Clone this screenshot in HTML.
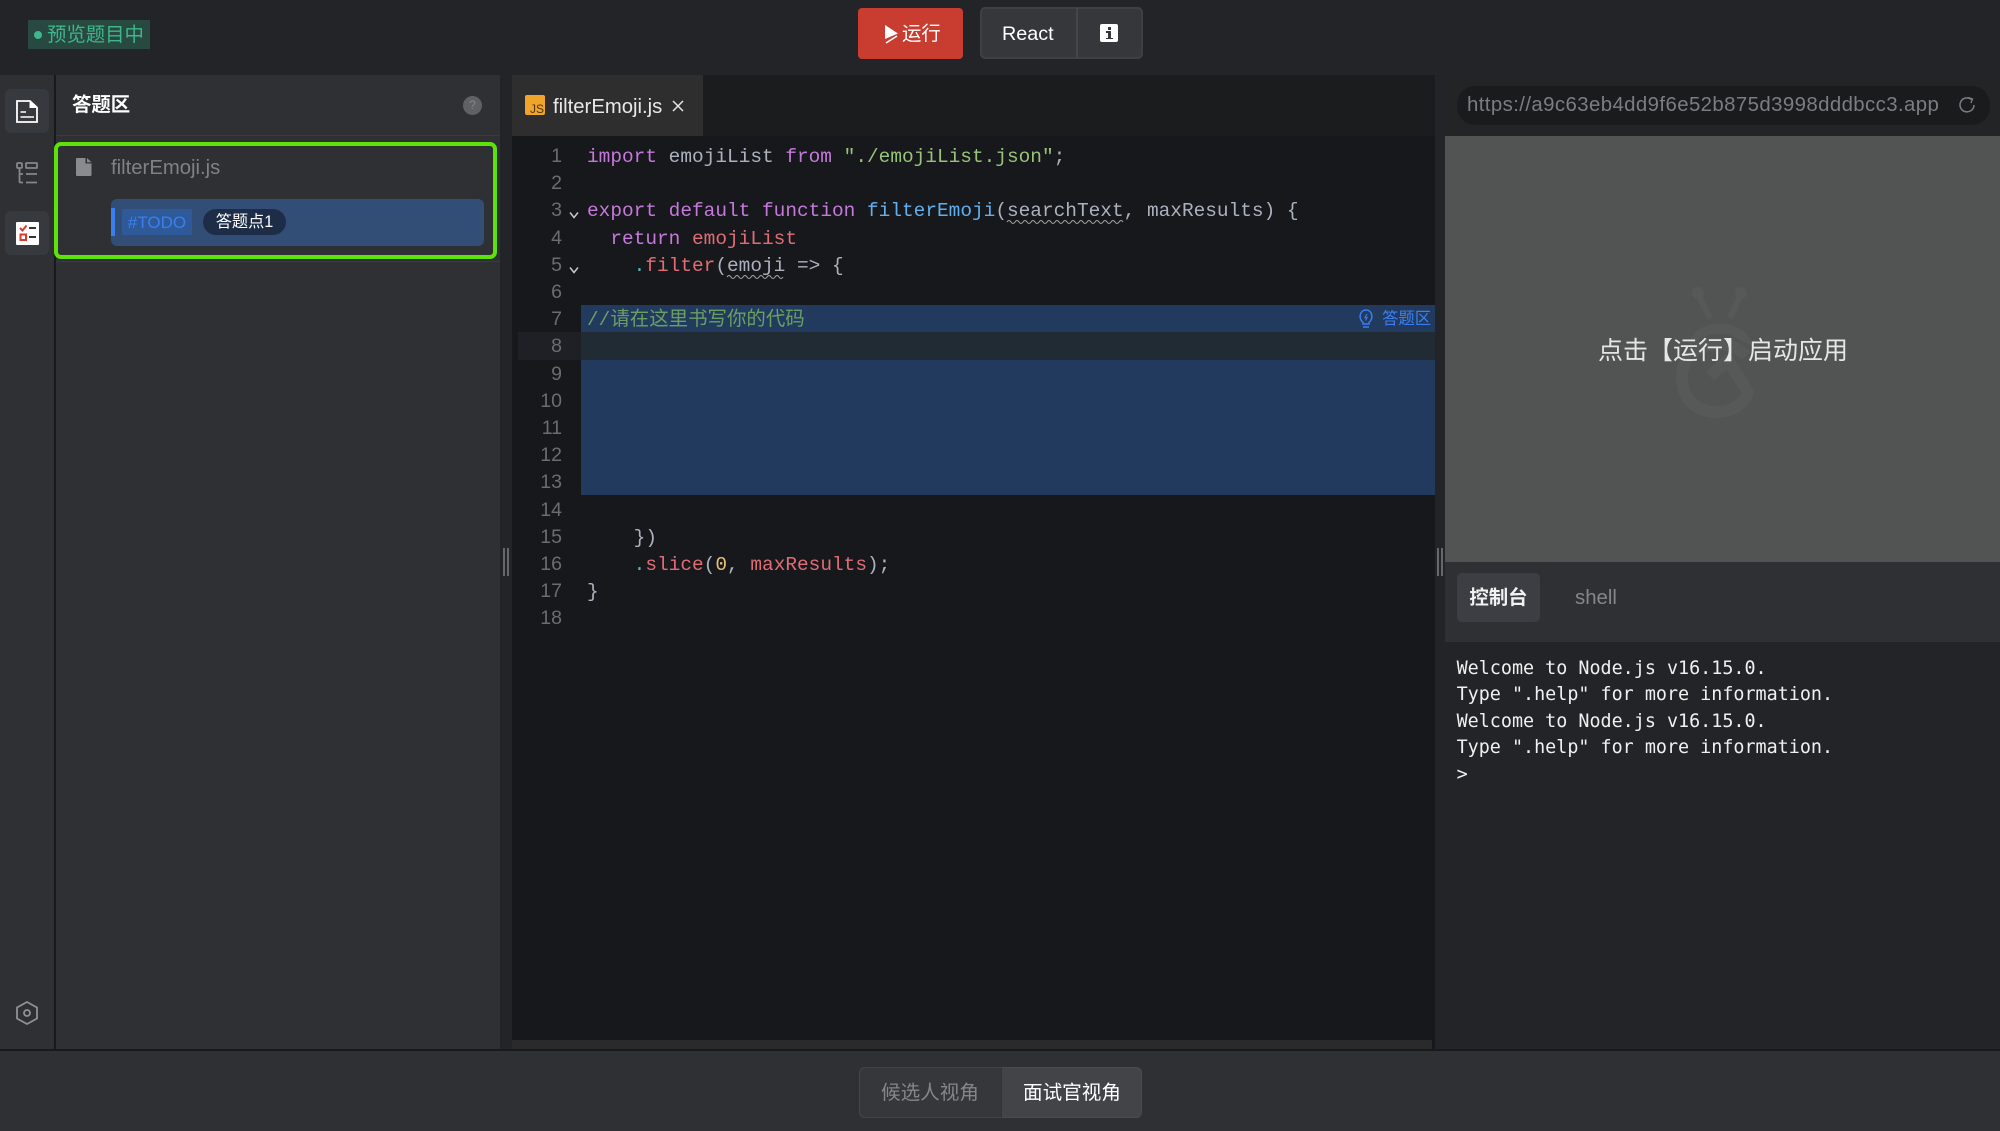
<!DOCTYPE html>
<html lang="zh"><head><meta charset="utf-8"><title>preview</title>
<style>
html,body{margin:0;padding:0;width:2000px;height:1131px;overflow:hidden;background:#232427}
body{position:relative;font-family:"Liberation Sans","Noto Sans CJK SC",sans-serif;color:#fff}
.a{position:absolute;white-space:pre;box-sizing:border-box}
.c{position:absolute;left:587px;height:27px;margin-top:1.5px;white-space:pre;font:19.44px/27px "Liberation Mono","Noto Sans CJK SC",monospace;color:#abb2bf}
.n{position:absolute;left:521px;width:41px;text-align:right;margin-top:1px;font:19.55px/27px "Liberation Sans",sans-serif;color:#6a6c6f;height:27px}
.k{color:#c678dd}.s{color:#98c379}.f{color:#61afef}.v{color:#e06c75}.d{color:#56b6c2}.o{color:#e5c07b}
.con{position:absolute;left:1456.6px;font:18.4px/26.4px "DejaVu Sans Mono",monospace;color:#f0f0f0;white-space:pre}
svg{position:absolute;overflow:visible}
</style></head><body>

<!-- top bar -->
<div class="a" style="left:28px;top:20px;width:122px;height:29px;background:#27493f"></div>
<div class="a" style="left:34px;top:31px;width:8px;height:8px;border-radius:50%;background:#3fb68b"></div>
<div class="a" style="left:47px;top:21px;font-size:19.4px;line-height:29px;color:#3fb68b">预览题目中</div>

<div class="a" style="left:858px;top:8px;width:105px;height:51px;background:#c93d30;border-radius:4px"></div>
<svg style="left:884px;top:24px" width="16" height="20" viewBox="0 0 16 20"><path d="M1 1L14 9.500L1 15Z" fill="#fff"/><path d="M2 19L13 12" stroke="#fff" stroke-width="1.600"/></svg>
<div class="a" style="left:902px;top:9px;font-size:19.4px;line-height:51px;color:#fff">运行</div>

<div class="a" style="left:980px;top:7px;width:163px;height:52px;background:#36373b;border:2px solid #3f4044;border-radius:5px"></div>
<div class="a" style="left:1076px;top:8px;width:2px;height:50px;background:#45464a"></div>
<div class="a" style="left:1002px;top:9px;font-size:19.8px;line-height:51px;color:#fff">React</div>
<div class="a" style="left:1100px;top:24px;width:18px;height:18px;background:#fff;border-radius:2px"></div>
<div class="a" style="left:1107.500px;top:27px;width:3px;height:3px;background:#36373b"></div>
<div class="a" style="left:1107.500px;top:31px;width:3px;height:8px;background:#36373b"></div>
<div class="a" style="left:1105.500px;top:31px;width:3px;height:1.500px;background:#36373b"></div>
<div class="a" style="left:1105.500px;top:37.500px;width:7px;height:1.500px;background:#36373b"></div>

<!-- sidebar -->
<div class="a" style="left:0;top:75px;width:54px;height:975px;background:#2f3034"></div>
<div class="a" style="left:54px;top:75px;width:2px;height:975px;background:#18191b"></div>
<div class="a" style="left:5px;top:89px;width:44px;height:44px;background:#36393d;border-radius:6px"></div>
<div class="a" style="left:5px;top:211px;width:44px;height:44px;background:#36393d;border-radius:6px"></div>
<svg style="left:15px;top:99px" width="24" height="25" viewBox="0 0 24 25" fill="none"><path d="M2 2H15L22 8.500V23H2Z" stroke="#fff" stroke-width="1.800"/><path d="M15 2V8.500H22" fill="#fff" stroke="#fff" stroke-width="1"/><path d="M5.500 13H11M5.500 18H19" stroke="#fff" stroke-width="1.500"/></svg>
<svg style="left:15px;top:161px" width="24" height="24" viewBox="0 0 24 24" fill="none" stroke="#85868a" stroke-width="1.800"><rect x="2" y="2" width="5" height="5" rx="1"/><path d="M4.500 7V20.500Q4.500 21.500 5.500 21.500H8M4.500 13H8"/><rect x="11" y="2" width="11" height="5" rx=".5"/><path d="M11 13H22M11 21.500H22"/></svg>
<svg style="left:16px;top:222px" width="23" height="23" viewBox="0 0 23 23"><rect width="23" height="23" rx="1" fill="#fff"/><path d="M4 6L6.500 8.500L10.500 3.500" stroke="#d93a2e" stroke-width="2" fill="none"/><rect x="4.500" y="12.500" width="5.500" height="5.500" fill="none" stroke="#d93a2e" stroke-width="2"/><path d="M13 6H20M13 15H20" stroke="#333" stroke-width="2"/></svg>
<svg style="left:15px;top:1000px" width="24" height="26" viewBox="0 0 24 26" fill="none" stroke="#909194" stroke-width="1.800"><path d="M12 2L22 7.500V18.500L12 24L2 18.500V7.500Z"/><circle cx="12" cy="13" r="3"/></svg>

<!-- left panel -->
<div class="a" style="left:56px;top:75px;width:444px;height:975px;background:#2f3034"></div>
<div class="a" style="left:56px;top:135px;width:444px;height:1px;background:#3a3b3f"></div>
<div class="a" style="left:56px;top:261px;width:444px;height:1px;background:#3a3b3f"></div>
<div class="a" style="left:72px;top:90px;font-size:19.4px;line-height:30px;font-weight:bold;color:#fff">答题区</div>
<div class="a" style="left:463px;top:95.500px;width:19px;height:19px;border-radius:50%;background:#606164;color:#85868a;font-size:12px;line-height:19px;text-align:center">?</div>
<div class="a" style="left:54px;top:142px;width:443px;height:117px;border:4px solid #5de20b;border-radius:7px"></div>
<svg style="left:75px;top:158px" width="17" height="18" viewBox="0 0 17 18"><path d="M1 1Q1 0 2 0H10.500V5.500H16.500V17Q16.500 18 15.500 18H2Q1 18 1 17ZM12 0L16.500 4.200H12Z" fill="#8a8b8e"/></svg>
<div class="a" style="left:111px;top:153px;font-size:20.3px;line-height:30px;color:#808185">filterEmoji.js</div>
<div class="a" style="left:111px;top:199px;width:373px;height:47px;background:#334e76;border-radius:6px"></div>
<div class="a" style="left:111px;top:208px;width:4px;height:28px;background:#3a7ff0"></div>
<div class="a" style="left:122px;top:209px;width:70px;height:26px;background:#2f5a9a;border-radius:2px;color:#3a7ff0;font-size:17px;line-height:27px;text-align:center">#TODO</div>
<div class="a" style="left:203px;top:209px;width:83px;height:26px;background:#1d2d47;border-radius:13px;color:#fff;font-size:16.2px;line-height:27px;text-align:center">答题点1</div>
<div class="a" style="left:503px;top:548px;width:2px;height:28px;background:#66676a"></div>
<div class="a" style="left:507px;top:548px;width:2px;height:28px;background:#66676a"></div>

<!-- editor -->
<div class="a" style="left:512px;top:75px;width:923px;height:975px;background:#17181b"></div>
<div class="a" style="left:512px;top:75px;width:923px;height:61px;background:#1b1c1e"></div>
<div class="a" style="left:512px;top:75px;width:191px;height:61px;background:#2e2e2e"></div>
<div class="a" style="left:525px;top:95px;width:20px;height:20px;background:#f0a52a;border-radius:2px"></div>
<div class="a" style="left:530px;top:102px;font-size:12px;line-height:14px;color:#4a3410">JS</div>
<div class="a" style="left:553px;top:92px;font-size:20.3px;line-height:30px;color:#e8e8e8">filterEmoji.js</div>
<svg style="left:672px;top:100px" width="12" height="12" viewBox="0 0 12 12"><path d="M1 1L11 11M11 1L1 11" stroke="#e8e8e8" stroke-width="1.500"/></svg>

<div class="a" style="left:518px;top:332px;width:63px;height:28px;background:#1f2026"></div>
<div class="a" style="left:581px;top:305px;width:854px;height:27px;background:#233a5f"></div>
<div class="a" style="left:581px;top:332px;width:854px;height:28px;background:#202b33"></div>
<div class="a" style="left:581px;top:360px;width:854px;height:135px;background:#233a5f"></div>
<div class="a" style="left:512px;top:1040px;width:920px;height:9px;background:#2a2a2a"></div>
<div class="a" style="left:0;top:1049px;width:2000px;height:2px;background:#18191b"></div>

<div class="n" style="top:142px">1</div><div class="n" style="top:169px">2</div><div class="n" style="top:196px">3</div>
<div class="n" style="top:224px">4</div><div class="n" style="top:251px">5</div><div class="n" style="top:278px">6</div>
<div class="n" style="top:305px">7</div><div class="n" style="top:332px">8</div><div class="n" style="top:360px">9</div>
<div class="n" style="top:387px">10</div><div class="n" style="top:414px">11</div><div class="n" style="top:441px">12</div>
<div class="n" style="top:468px">13</div><div class="n" style="top:496px">14</div><div class="n" style="top:523px">15</div>
<div class="n" style="top:550px">16</div><div class="n" style="top:577px">17</div><div class="n" style="top:604px">18</div>

<svg style="left:569px;top:211px" width="10" height="8" viewBox="0 0 10 8"><path d="M1 1.500L5 6.500L9 1.500" stroke="#c8c8c8" stroke-width="1.500" fill="none"/></svg>
<svg style="left:569px;top:266px" width="10" height="8" viewBox="0 0 10 8"><path d="M1 1.500L5 6.500L9 1.500" stroke="#c8c8c8" stroke-width="1.500" fill="none"/></svg>

<div class="c" style="top:142px"><span class="k">import</span> emojiList <span class="k">from</span> <span class="s">"./emojiList.json"</span>;</div>
<div class="c" style="top:196px"><span class="k">export</span> <span class="k">default</span> <span class="k">function</span> <span class="f">filterEmoji</span>(searchText, maxResults) {</div>
<div class="c" style="top:224px">  <span class="k">return</span> <span class="v">emojiList</span></div>
<div class="c" style="top:251px">    <span class="d">.</span><span class="v">filter</span>(emoji =&gt; {</div>
<div class="c" style="top:305.500px;left:587px;color:#6a9f62">//请在这里书写你的代码</div>
<div class="c" style="top:523px">    })</div>
<div class="c" style="top:550px">    <span class="d">.</span><span class="v">slice</span>(<span class="o">0</span>, <span class="v">maxResults</span>);</div>
<div class="c" style="top:577px">}</div>

<svg style="left:1007px;top:219px" width="118" height="5" viewBox="0 0 118 5"><path d="M0 3q2-3 4 0t4 0 4 0 4 0 4 0 4 0 4 0 4 0 4 0 4 0 4 0 4 0 4 0 4 0 4 0 4 0 4 0 4 0 4 0 4 0 4 0 4 0 4 0 4 0 4 0 4 0 4 0 4 0 4 0" fill="none" stroke="#a8a8a8" stroke-width="1"/></svg>
<svg style="left:727px;top:274px" width="59" height="5" viewBox="0 0 59 5"><path d="M0 3q2-3 4 0t4 0 4 0 4 0 4 0 4 0 4 0 4 0 4 0 4 0 4 0 4 0 4 0 4 0" fill="none" stroke="#a8a8a8" stroke-width="1"/></svg>

<svg style="left:1359px;top:309px" width="14" height="19" viewBox="0 0 14 19" fill="none" stroke="#3a7ff0" stroke-width="1.500"><path d="M4 13.500C-1 9 1 1 7 1S15 9 10 13.500V15H4ZM4 18H10"/><path d="M8 5L6 8.500H8L6.500 11.500" stroke-width="1.200"/></svg>
<div class="a" style="left:1382px;top:305.500px;font-size:16.4px;line-height:27px;color:#3a7ff0">答题区</div>
<div class="a" style="left:1437px;top:548px;width:2px;height:28px;background:#66676a"></div>
<div class="a" style="left:1441px;top:548px;width:2px;height:28px;background:#66676a"></div>

<!-- right panel -->
<div class="a" style="left:1445px;top:75px;width:555px;height:61px;background:#232425"></div>
<div class="a" style="left:1457px;top:86px;width:533px;height:39px;background:#1a1b1d;border-radius:18px"></div>
<div class="a" style="left:1467px;top:86px;font-size:20.4px;line-height:38px;color:#7c7d80;letter-spacing:.4px">https://a9c63eb4dd9f6e52b875d3998dddbcc3.app</div>
<svg style="left:1958px;top:96px" width="18" height="18" viewBox="0 0 18 18" fill="none" stroke="#7c7d80" stroke-width="1.500"><path d="M13.500 3.500A7 7 0 1 0 16 9"/><path d="M10.500 1.500L14.500 3L13 7" stroke-width="1.300"/></svg>
<div class="a" style="left:1445px;top:136px;width:555px;height:426px;background:#525453"></div>
<svg style="left:1670px;top:284px" width="100" height="136" viewBox="0 0 100 136" fill="none" stroke="#575958"><circle cx="28" cy="9" r="6" fill="#575958" stroke="none"/><circle cx="71" cy="9" r="6" fill="#575958" stroke="none"/><path d="M28 10L40 34M71 10L60 34" stroke-width="6"/><path d="M20 62C20 32 78 32 82 62L70 56C56 46 36 48 20 62Z" fill="#575958" stroke="none"/><path d="M76 72C60 52 12 56 12 94C12 118 30 128 46 128C62 128 74 120 78 108L58 76L40 92" stroke-width="12" stroke-linejoin="round"/></svg>
<div class="a" style="left:1598px;top:335px;font-size:25px;line-height:32px;color:#e6e6e6">点击【运行】启动应用</div>

<div class="a" style="left:1445px;top:562px;width:555px;height:80px;background:#2f3034"></div>
<div class="a" style="left:1457px;top:573px;width:83px;height:49px;background:#3d3e43;border-radius:5px;font-size:19.4px;line-height:50px;text-align:center;font-weight:bold;color:#f2f2f2">控制台</div>
<div class="a" style="left:1575px;top:574px;font-size:20.4px;line-height:49px;color:#85868a">shell</div>
<div class="con" style="top:656px">Welcome to Node.js v16.15.0.
Type ".help" for more information.
Welcome to Node.js v16.15.0.
Type ".help" for more information.
&gt;</div>

<!-- bottom bar -->
<div class="a" style="left:0;top:1051px;width:2000px;height:80px;background:#2f3034"></div>
<div class="a" style="left:859px;top:1067px;width:283px;height:51px;background:#36373b;border:1.500px solid #434448;border-radius:6px"></div>
<div class="a" style="left:1001px;top:1067px;width:141px;height:51px;background:#434447;border-radius:0 6px 6px 0;border:1.500px solid #4a4b4f;border-left:1.500px solid #333438"></div>
<div class="a" style="left:881px;top:1068px;font-size:19.6px;line-height:51px;color:#85868a">候选人视角</div>
<div class="a" style="left:1023px;top:1068px;font-size:19.6px;line-height:51px;color:#fff">面试官视角</div>
</body></html>
